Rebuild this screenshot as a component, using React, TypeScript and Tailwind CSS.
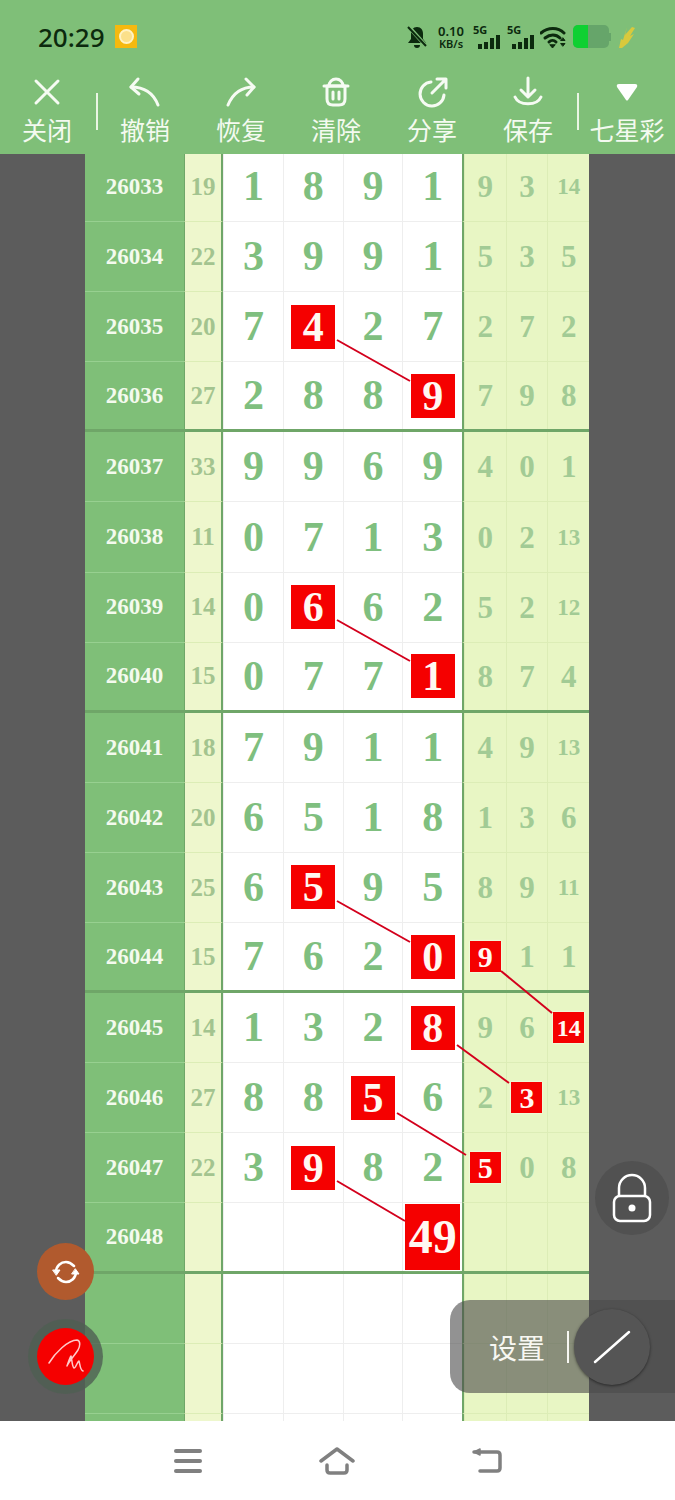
const CJK = "font-['Noto_Sans_CJK_SC','Noto_Sans',sans-serif]";

type Row = { id: string; sum: string; main: string[]; side: string[]; hitMain?: number; hitSide?: number };

const rows: Row[] = [
  { id: '26033', sum: '19', main: ['1', '8', '9', '1'], side: ['9', '3', '14'] },
  { id: '26034', sum: '22', main: ['3', '9', '9', '1'], side: ['5', '3', '5'] },
  { id: '26035', sum: '20', main: ['7', '4', '2', '7'], side: ['2', '7', '2'], hitMain: 1 },
  { id: '26036', sum: '27', main: ['2', '8', '8', '9'], side: ['7', '9', '8'], hitMain: 3 },
  { id: '26037', sum: '33', main: ['9', '9', '6', '9'], side: ['4', '0', '1'] },
  { id: '26038', sum: '11', main: ['0', '7', '1', '3'], side: ['0', '2', '13'] },
  { id: '26039', sum: '14', main: ['0', '6', '6', '2'], side: ['5', '2', '12'], hitMain: 1 },
  { id: '26040', sum: '15', main: ['0', '7', '7', '1'], side: ['8', '7', '4'], hitMain: 3 },
  { id: '26041', sum: '18', main: ['7', '9', '1', '1'], side: ['4', '9', '13'] },
  { id: '26042', sum: '20', main: ['6', '5', '1', '8'], side: ['1', '3', '6'] },
  { id: '26043', sum: '25', main: ['6', '5', '9', '5'], side: ['8', '9', '11'], hitMain: 1 },
  { id: '26044', sum: '15', main: ['7', '6', '2', '0'], side: ['9', '1', '1'], hitMain: 3, hitSide: 0 },
  { id: '26045', sum: '14', main: ['1', '3', '2', '8'], side: ['9', '6', '14'], hitMain: 3, hitSide: 2 },
  { id: '26046', sum: '27', main: ['8', '8', '5', '6'], side: ['2', '3', '13'], hitMain: 2, hitSide: 1 },
  { id: '26047', sum: '22', main: ['3', '9', '8', '2'], side: ['5', '0', '8'], hitMain: 1, hitSide: 0 },
  { id: '26048', sum: '', main: ['', '', '', '49'], side: ['', '', ''], hitMain: 3 },
  { id: '', sum: '', main: ['', '', '', ''], side: ['', '', ''] },
  { id: '', sum: '', main: ['', '', '', ''], side: ['', '', ''] },
  { id: '', sum: '', main: ['', '', '', ''], side: ['', '', ''] },
];

const links = [
  [337, 340, 410, 381],
  [337, 620, 410, 661],
  [337, 901, 410, 942],
  [501, 971, 552, 1013],
  [457, 1045, 509, 1083],
  [397, 1113, 466, 1155],
  [337, 1181, 405, 1221],
];

function ToolItem({ label, width, children }: { label: string; width: string; children: React.ReactNode }) {
  return (
    <div className={`${width} flex flex-col items-center shrink-0 pt-[3px]`}>
      <div className="h-[38px] flex items-center justify-center">{children}</div>
      <span className={`text-[25px] leading-[36px] text-[#f4faf0] whitespace-nowrap ${CJK}`}>{label}</span>
    </div>
  );
}

function Icon({ children }: { children: React.ReactNode }) {
  return (
    <svg width="34" height="34" viewBox="0 0 34 34" fill="none" stroke="#f6fbf3" strokeWidth="3" strokeLinecap="round" strokeLinejoin="round">
      {children}
    </svg>
  );
}

function Signal() {
  return (
    <div className="ml-[7px] w-[27px] flex flex-col font-['Noto_Sans',sans-serif] text-[#0c2a0e]">
      <span className="text-[11px] font-bold leading-[10px]">5G</span>
      <div className="flex items-end gap-[2px] h-[14px] justify-end">
        <div className="w-[4px] h-[5px] bg-[#0c2a0e]" />
        <div className="w-[4px] h-[7px] bg-[#0c2a0e]" />
        <div className="w-[4px] h-[11px] bg-[#0c2a0e]" />
        <div className="w-[4px] h-[14px] bg-[#0c2a0e]" />
      </div>
    </div>
  );
}

function StatusBar() {
  return (
    <div className="h-[70px] flex items-center pl-[38px] pt-[3px]">
      <span className="text-[26px] font-medium text-[#0c2a0e] font-['Noto_Sans',sans-serif] leading-none w-[77px]">20:29</span>
      <div className="w-[22px] h-[23px] bg-[#f5b90f] flex items-center justify-center">
        <div className="w-[15px] h-[15px] rounded-full bg-[#fbe08a] border-2 border-[#fff3c4]" />
      </div>
      <div className="ml-[269px] flex items-center">
        <svg width="22" height="24" viewBox="0 0 22 24" fill="#0c2a0e">
          <path d="M11 2c-4 0-6 3-6 7v5l-3 4h18l-3-4V9c0-4-2-7-6-7zM8 20h6c0 2-1 3-3 3s-3-1-3-3z" />
          <path d="M2 1l18 20" stroke="#7fbf78" strokeWidth="4" />
          <path d="M2 2l18 19" stroke="#0c2a0e" strokeWidth="2" />
        </svg>
        <div className="ml-[8px] w-[30px] flex flex-col items-center font-['Noto_Sans',sans-serif] text-[#0c2a0e] font-semibold">
          <span className="text-[13px] leading-[14px]">0.10</span>
          <span className="text-[11px] leading-[12px]">KB/s</span>
        </div>
        <Signal />
        <Signal />
        <svg className="ml-[6px]" width="28" height="24" viewBox="0 0 28 24" fill="none" stroke="#0c2a0e" strokeWidth="3" strokeLinecap="round">
          <path d="M1 8c7-6 17-6 23 0" />
          <path d="M5 13c5-4 11-4 15 0" />
          <path d="M9 17c2-2 5-2 7 0" />
          <path d="M10 20l2.500 3 2.500-3z" fill="#0c2a0e" strokeWidth="1" />
          <path d="M23 13l2 2.500h-4zM23 21l2-2.500h-4z" fill="#0c2a0e" strokeWidth="1" />
        </svg>
        <div className="ml-[5px] w-[36px] h-[23px] rounded-[5px] bg-[#66a56a] overflow-hidden">
          <div className="w-[15px] h-full bg-[#0fd032]" />
        </div>
        <div className="w-[2px] h-[8px] bg-[#66a56a]" />
        <svg className="ml-[5px]" width="20" height="24" viewBox="0 0 20 24" fill="#d9c93c">
          <path d="M11 2l-2 8 7-8 3 1-5 8 4-2-6 9-6 5-3 0 2-9 2 1z" />
        </svg>
      </div>
    </div>
  );
}

function Toolbar() {
  return (
    <div className="h-[84px] flex items-start">
      <ToolItem label="关闭" width="w-[94px]">
        <Icon><path d="M6 6l22 22M28 6L6 28" /></Icon>
      </ToolItem>
      <div className="w-[2px] h-[37px] mt-[23px] ml-[2px] bg-[#eaf5e4]" />
      <ToolItem label="撤销" width="w-[94px]">
        <Icon><path d="M10 4L3 12l8 7" /><path d="M3 12c12 0 22 5 27 18" /></Icon>
      </ToolItem>
      <ToolItem label="恢复" width="w-[98px]">
        <Icon><path d="M22 4l8 8-7 8" /><path d="M30 12C18 12 9 18 4 30" /></Icon>
      </ToolItem>
      <ToolItem label="清除" width="w-[92px]">
        <Icon>
          <path d="M10 11c0-4 3-7 7-7s7 3 7 7" />
          <path d="M5 11h24" />
          <path d="M8 11h18v13c0 4-2 6-6 6h-6c-4 0-6-2-6-6z" />
          <path d="M14 17v7M20 17v7" />
        </Icon>
      </ToolItem>
      <ToolItem label="分享" width="w-[100px]">
        <Icon>
          <path d="M16 7A12 12 0 1 0 29 20" />
          <path d="M17 18L30 5M22 4h9v9" />
        </Icon>
      </ToolItem>
      <ToolItem label="保存" width="w-[92px]">
        <Icon>
          <path d="M17 3v19M10 15l7 7 7-7" />
          <path d="M4 22c4 9 22 9 26 0" />
        </Icon>
      </ToolItem>
      <div className="w-[2px] h-[37px] mt-[23px] ml-[3px] bg-[#eaf5e4]" />
      <ToolItem label="七星彩" width="w-[96px]">
        <svg width="24" height="20" viewBox="0 0 24 20" fill="#ffffff">
          <path d="M4 2h16q3 0 2 3L13 18q-1 1-2 0L2 5Q1 2 4 2z" />
        </svg>
      </ToolItem>
    </div>
  );
}

function Cell({ value, hit, side }: { value: string; hit: boolean; side?: boolean }) {
  const isBig = value === '49';
  if (hit) {
    const box = isBig ? 'w-[55px] h-[66px] text-[48px]' : side ? 'w-[31px] h-[31px]' : 'w-[44px] h-[44px] text-[42px]';
    const sideSize = value.length > 1 ? 'text-[24px]' : 'text-[30px]';
    return (
      <div className={`flex items-center justify-center ${side ? 'border-l border-[#dcedb6]' : 'border-l border-[#eeeeee]'}`}>
        <div className={`${box} ${side ? sideSize : ''} bg-[#f50000] text-[#fff8f2] flex items-center justify-center leading-none shadow-[0_0_2px_#ffffff]`}>{value}</div>
      </div>
    );
  }
  if (side) {
    return (
      <div className={`flex items-center justify-center border-l border-[#dcedb6] text-[#a2cb95] leading-none ${value.length > 1 ? 'text-[23px]' : 'text-[31px]'}`}>
        {value}
      </div>
    );
  }
  return <div className="flex items-center justify-center border-l border-[#eeeeee] text-[#7fbf7f] text-[42px] leading-none pb-[1px]">{value}</div>;
}

function TableRow({ row, index }: { row: Row; index: number }) {
  const thick = index % 4 === 3;
  return (
    <div className="flex h-[70.1px] shrink-0">
      <div className={`w-[99px] bg-[#7fbf78] flex items-center justify-center pt-[1px] text-[23px] text-[#f4faee] ${thick ? 'border-b-[3px] border-[#6fa668]' : 'border-b border-[#97d090]'}`}>{row.id}</div>
      <div className={`w-[39px] bg-[#eef7cd] border-l border-r-2 border-l-[#6fa668] border-r-[#6fa668] flex items-center justify-center text-[25px] text-[#a3c48f] ${thick ? 'border-b-[3px] border-b-[#6fa668]' : 'border-b border-b-[#dcedb6]'}`}>{row.sum}</div>
      <div className={`w-[239px] grid grid-cols-4 bg-white ${thick ? 'border-b-[3px] border-[#6fa668]' : 'border-b border-[#eeeeee]'}`}>
        {row.main.map((v, i) => <Cell key={i} value={v} hit={row.hitMain === i} />)}
      </div>
      <div className={`w-[127px] grid grid-cols-3 bg-[#e8f6c4] border-l-2 border-l-[#6fa668] ${thick ? 'border-b-[3px] border-b-[#6fa668]' : 'border-b border-b-[#dcedb6]'}`}>
        {row.side.map((v, i) => <Cell key={i} value={v} hit={row.hitSide === i} side />)}
      </div>
    </div>
  );
}

export default function App() {
  return (
    <div className="relative w-[675px] h-[1500px] overflow-hidden flex flex-col bg-white">
      <div className="bg-[#7fbf78] shrink-0">
        <StatusBar />
        <Toolbar />
      </div>

      <div className="h-[1267px] bg-[#5c5c5c] overflow-hidden pl-[85px] font-bold font-['Liberation_Serif',serif]">
        <div className="flex flex-col mt-[-2px]">
          {rows.map((row, i) => <TableRow key={i} row={row} index={i} />)}
        </div>
      </div>

      <div className="flex-1 flex items-center">
        <div className="ml-[174px] w-[28px] flex flex-col gap-[6px]">
          <div className="h-[4px] rounded-full bg-[#808080]" />
          <div className="h-[4px] rounded-full bg-[#808080]" />
          <div className="h-[4px] rounded-full bg-[#808080]" />
        </div>
        <svg className="ml-[117px]" width="36" height="28" viewBox="0 0 36 28" fill="none" stroke="#808080" strokeWidth="3.500" strokeLinecap="round" strokeLinejoin="round">
          <path d="M2 14L18 2l16 12" />
          <path d="M8 18v5c0 2 1 3 3 3h14c2 0 3-1 3-3v-5" />
        </svg>
        <svg className="ml-[116px]" width="32" height="28" viewBox="0 0 32 28" fill="none" stroke="#808080" strokeWidth="3.500" strokeLinecap="round" strokeLinejoin="round">
          <path d="M3 5h23c2 0 3 1 3 3v13c0 2-1 3-3 3H9" />
          <path d="M9 2L3 5l6 3z" fill="#808080" strokeWidth="1.500" />
        </svg>
      </div>

      {/* connecting lines between the hit numbers */}
      <svg className="absolute left-0 top-0 pointer-events-none" width="675" height="1500" fill="none" stroke="#d3001c" strokeWidth="2">
        {links.map((l, i) => <line key={i} x1={l[0]} y1={l[1]} x2={l[2]} y2={l[3]} />)}
      </svg>

      <div className="absolute left-[37px] top-[1243px] w-[57px] h-[57px] rounded-full bg-[#b15a2e] flex items-center justify-center">
        <svg width="32" height="32" viewBox="0 0 32 32" fill="none" stroke="#ffffff" strokeWidth="2.500" strokeLinecap="round">
          <path d="M6 16c0-6 5-10 10-10 4 0 6 2 8 4" />
          <path d="M26 16c0 6-5 10-10 10-4 0-6-2-8-4" />
          <path d="M3 14h7l-3.500 5z" fill="#ffffff" strokeWidth="1" />
          <path d="M22 18h7l-3.500-5z" fill="#ffffff" strokeWidth="1" />
        </svg>
      </div>

      <div className="absolute left-[28px] top-[1319px] w-[75px] h-[75px] rounded-full bg-[#4f5f52]/80 flex items-center justify-center">
        <div className="w-[57px] h-[57px] rounded-full bg-[#f50000] flex items-center justify-center">
          <svg width="40" height="40" viewBox="0 0 40 40" fill="none" stroke="#ffc9c9" strokeWidth="1.500" strokeLinecap="round" strokeLinejoin="round">
            <path d="M3 26C9 16 22 3 31 3c4 1 3 6 1 10-3 5-9 11-11 16 1-3 3-9 4-10 1 3 1 11 3 12 2 0 3-6 5-7 1 3 1 9 4 10" />
          </svg>
        </div>
      </div>

      <div className="absolute left-[595px] top-[1161px] w-[74px] h-[74px] rounded-full bg-[#515151] flex items-center justify-center">
        <svg width="44" height="50" viewBox="0 0 44 50" fill="none" stroke="#ffffff" strokeWidth="2.500">
          <path d="M9 23v-8a13 13 0 0 1 26 0v8" />
          <rect x="4" y="23" width="36" height="25" rx="6" />
          <circle cx="22" cy="35" r="3.500" fill="#ffffff" stroke="none" />
        </svg>
      </div>

      <div className="absolute left-[450px] top-[1300px] w-[225px] h-[93px] rounded-l-[20px] bg-[#4a4a4a]/60 flex items-center pl-[39px]">
        <span className={`text-[28px] text-[#f7f7f2] leading-none w-[78px] ${CJK}`}>设置</span>
        <div className="w-[2px] h-[32px] bg-[#f7f7f2]" />
        <div className="ml-[5px] w-[76px] h-[76px] rounded-full bg-[#555555] shadow-[0_1px_3px_rgba(0,0,0,0.5)] flex items-center justify-center">
          <svg width="40" height="36" viewBox="0 0 40 36" fill="none" stroke="#ffffff" strokeWidth="2.500" strokeLinecap="round">
            <path d="M3 33L37 3" />
          </svg>
        </div>
      </div>
    </div>
  );
}
